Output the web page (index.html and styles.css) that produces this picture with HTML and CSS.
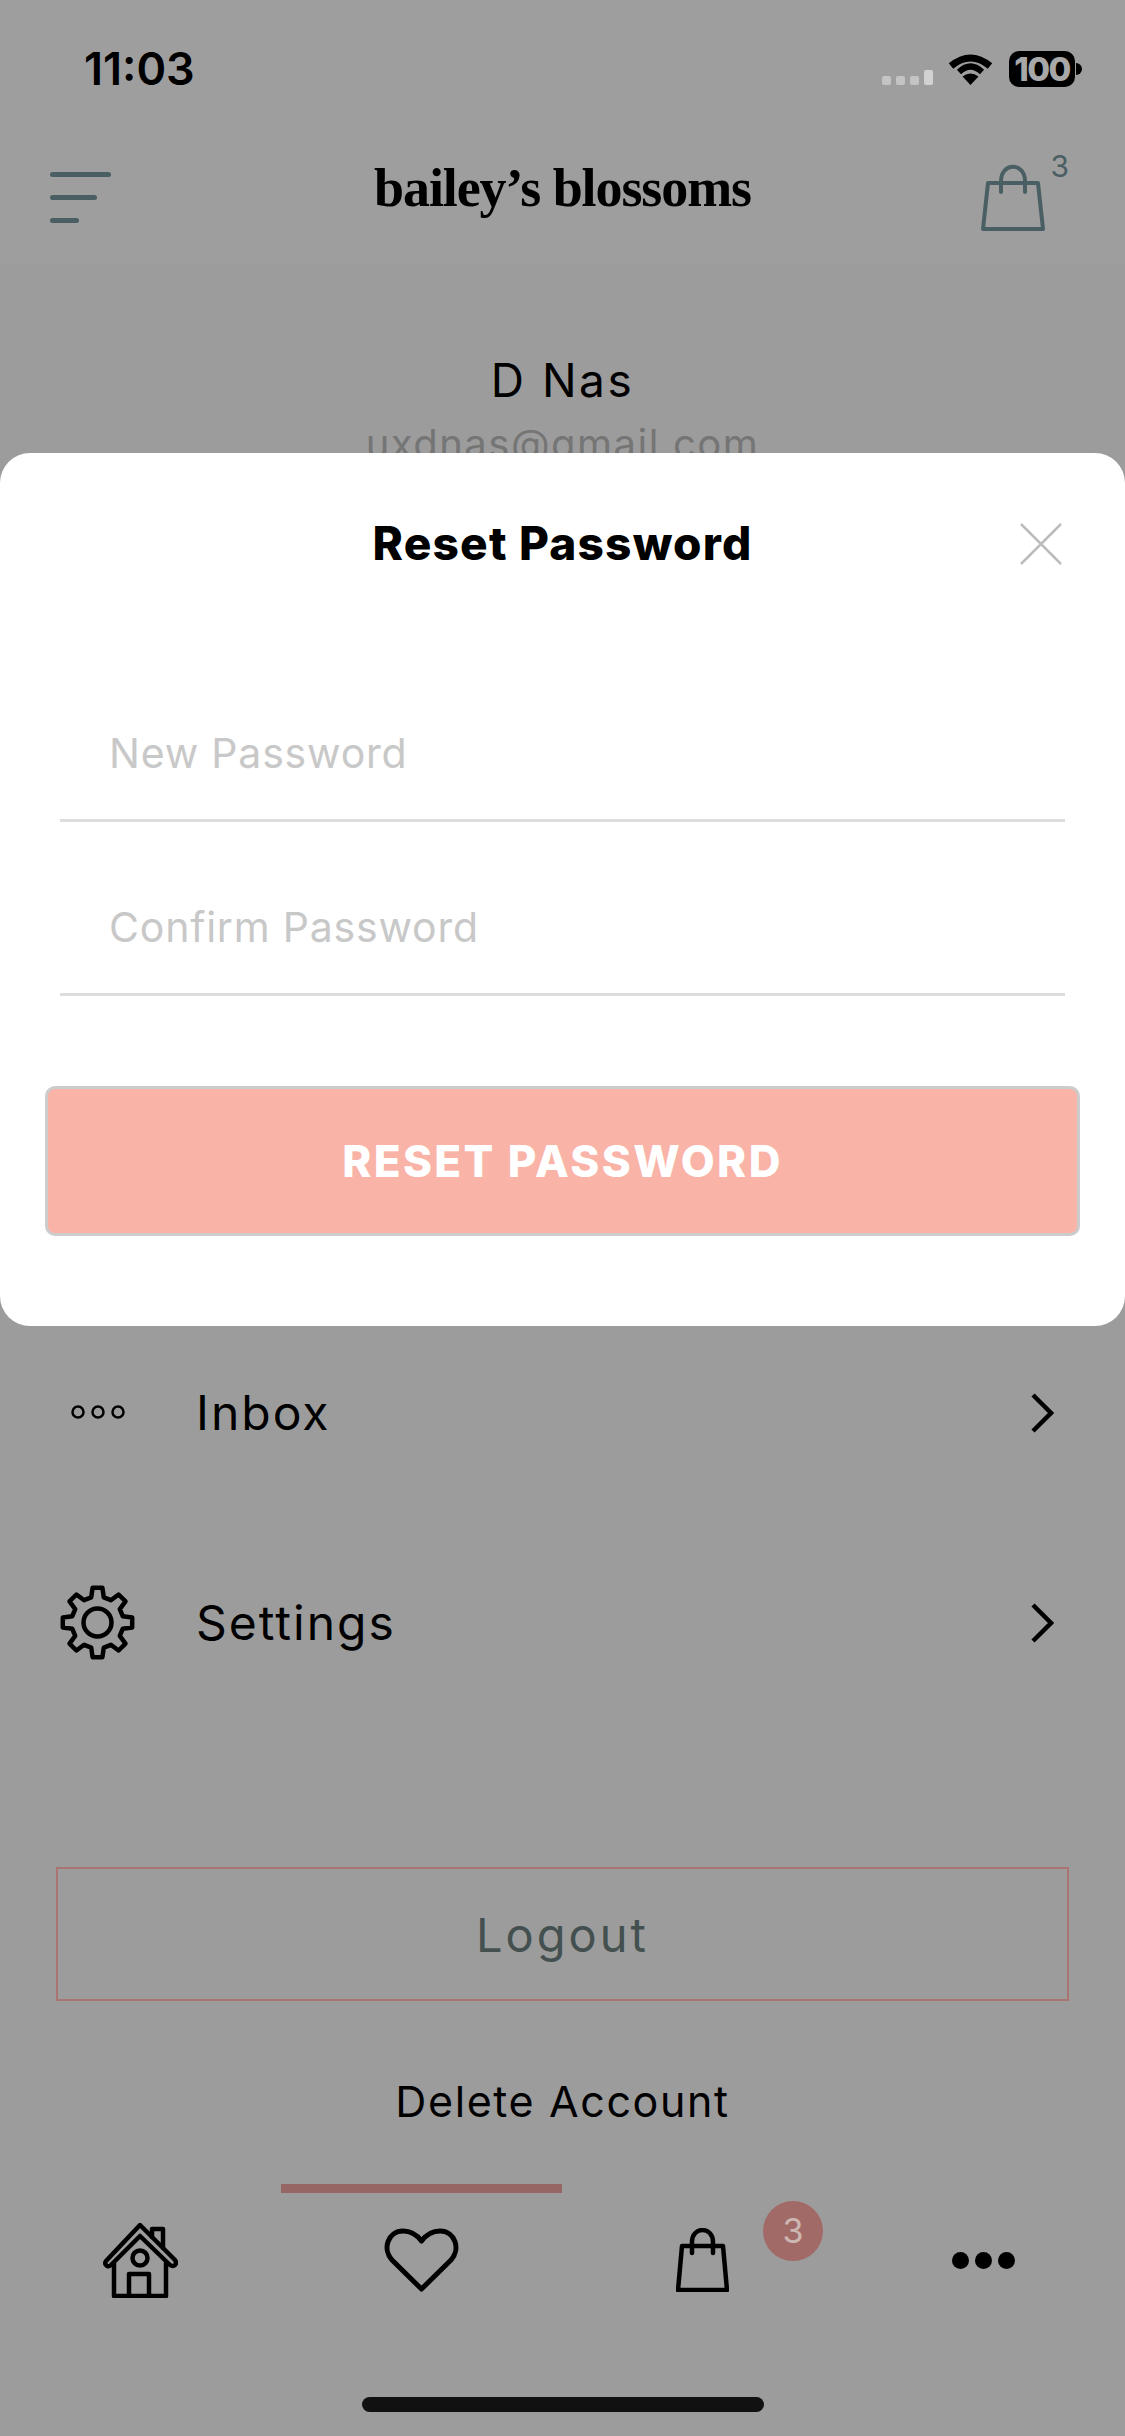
FILE: index.html
```html
<!DOCTYPE html>
<html lang="en">
<head>
    <meta charset="UTF-8">
    <meta name="viewport" content="width=device-width, initial-scale=1.0">
    <title>Bailey's Blossoms - Reset Password</title>
    <link rel="stylesheet" href="styles.css">
</head>
<body>
    <div class="screen">
        <div class="top">
            <div class="status-bar">
                <span class="time">11:03</span>
                <div class="status-icons">
                    <div class="signal"><i></i><i></i><i></i><i class="signal-tall"></i></div>
                    <svg class="wifi" width="45" height="33" viewBox="0 0 45 33">
                        <path d="M22.5 33 L14.5 24.5 Q22.5 18.5 30.5 24.5 Z" fill="#000"/>
                        <path d="M3 13 Q22.5 -3 42 13" fill="none" stroke="#000" stroke-width="7" stroke-linecap="butt" transform="translate(0 1)"/>
                        <path d="M11 20 Q22.5 9 34 20" fill="none" stroke="#000" stroke-width="6"/>
                    </svg>
                    <div class="battery"><span class="battery-level">100</span><i class="battery-tip"></i></div>
                </div>
            </div>
            <div class="nav">
                <div class="burger"><i class="line-a"></i><i class="line-b"></i><i class="line-c"></i></div>
                <div class="logo">bailey’s blossoms</div>
                <div class="cart">
                    <svg width="64" height="67" viewBox="0 0 64 67" fill="none" stroke="#4a5f63" stroke-width="4" stroke-linejoin="round" stroke-linecap="round">
                        <path d="M7 19 H57 L62 65 H2 Z"/>
                        <path d="M20 28 V17 C20 -2 44 -2 44 17 V28"/>
                    </svg>
                    <span class="cart-count">3</span>
                </div>
            </div>
        </div>

        <div class="profile">
            <div class="profile-name">D Nas</div>
            <div class="profile-email">uxdnas@gmail.com</div>
        </div>

        <div class="menu">
            <div class="menu-row">
                <span class="menu-icon">
                    <svg width="58" height="16" viewBox="0 0 58 16" fill="none" stroke="#000" stroke-width="2.5">
                        <circle cx="9" cy="8" r="5.5"/>
                        <circle cx="29" cy="8" r="5.5"/>
                        <circle cx="49" cy="8" r="5.5"/>
                    </svg>
                </span>
                <span class="menu-label">Inbox</span>
                <svg class="chevron" width="24" height="40" viewBox="0 0 24 40" fill="none" stroke="#000" stroke-width="4.5">
                    <path d="M3 2 L21 20 L3 38"/>
                </svg>
            </div>
            <div class="menu-row">
                <span class="menu-icon">
                    <svg width="75" height="75" viewBox="0 0 75 75" fill="none" stroke="#000" stroke-width="4.5" stroke-linejoin="round">
                        <path d="M31.2 12.3 L32.6 2.8 H42.4 L43.8 12.3 L50.9 15.2 L58.6 9.5 L65.5 16.4 L59.8 24.1 L62.7 31.2 L72.2 32.6 V42.4 L62.7 43.8 L59.8 50.9 L65.5 58.6 L58.6 65.5 L50.9 59.8 L43.8 62.7 L42.4 72.2 H32.6 L31.2 62.7 L24.1 59.8 L16.4 65.5 L9.5 58.6 L15.2 50.9 L12.3 43.8 L2.8 42.4 V32.6 L12.3 31.2 L15.2 24.1 L9.5 16.4 L16.4 9.5 L24.1 15.2 Z"/>
                        <circle cx="37.5" cy="37.5" r="14"/>
                    </svg>
                </span>
                <span class="menu-label">Settings</span>
                <svg class="chevron" width="24" height="40" viewBox="0 0 24 40" fill="none" stroke="#000" stroke-width="4.5">
                    <path d="M3 2 L21 20 L3 38"/>
                </svg>
            </div>
        </div>

        <button class="logout">Logout</button>
        <div class="delete-account">Delete Account</div>

        <div class="tabbar">
            <div class="tab">
                <svg width="75" height="75" viewBox="0 0 75 75" fill="none" stroke="#000" stroke-width="4.5" stroke-linejoin="round" stroke-linecap="round">
                    <path d="M3 38 Q1 41 4 43 Q6 44 8 42 L37 13 L67 42 Q70 44 72 42 Q74 40 72 37 L37 2 Z"/>
                    <path d="M49 14 V6 H60 V25"/>
                    <path d="M11 40 V73 H63 V40"/>
                    <path d="M26 73 V51 H46 V73"/>
                    <circle cx="37" cy="35" r="7.5"/>
                </svg>
            </div>
            <div class="tab tab-active">
                <svg width="75" height="64" viewBox="0 0 75 64" fill="none" stroke="#000" stroke-width="5" stroke-linejoin="round">
                    <path d="M37.5 61 L8 32 C-2 21 4 3 19 3 C27 3 33 7 37.5 13 C42 7 48 3 56 3 C71 3 77 21 67 32 Z"/>
                </svg>
            </div>
            <div class="tab">
                <svg width="53" height="64" viewBox="0 0 53 64" fill="none" stroke="#000" stroke-width="4.5" stroke-linejoin="round" stroke-linecap="round">
                    <path d="M6 18 H47 L51 62 H2 Z"/>
                    <path d="M16 25 V14 C16 -2 37 -2 37 14 V25"/>
                </svg>
                <span class="tab-badge">3</span>
            </div>
            <div class="tab">
                <div class="dots"><i></i><i></i><i></i></div>
            </div>
        </div>
        <div class="home-indicator"></div>

        <div class="modal">
            <div class="modal-title">Reset Password</div>
            <svg class="modal-close" width="44" height="44" viewBox="0 0 44 44" fill="none" stroke="#bdbdbd" stroke-width="2.5">
                <path d="M2 2 L42 42 M42 2 L2 42"/>
            </svg>
            <div class="field">New Password</div>
            <div class="field">Confirm Password</div>
            <button class="btn-reset">RESET PASSWORD</button>
        </div>
    </div>
</body>
</html>
```

FILE: styles.css
```css
* {
    box-sizing: border-box;
}

body {
    margin: 0;
    font-family: Inter, sans-serif;
    color: #000;
}

.screen {
    position: relative;
    width: 1125px;
    height: 2436px;
    overflow: hidden;
    background: #9c9c9c;
}

.top {
    height: 265px;
    background: #9e9e9e;
}

.status-bar {
    display: flex;
    justify-content: space-between;
    height: 136px;
    padding: 46px 43px 0 84px;
}

.time {
    font-size: 45px;
    line-height: 46px;
    font-weight: 600;
}

.status-icons {
    display: flex;
    align-items: flex-start;
    height: 40px;
    margin-top: 5px;
}

.signal {
    display: flex;
    align-items: flex-end;
    gap: 5px;
    height: 34px;
    margin-right: 15px;
}

.signal i {
    width: 9px;
    height: 9px;
    border-radius: 2px;
    background: #c4c4c4;
}

.signal .signal-tall {
    height: 15px;
    background: #d2d2d2;
}

.wifi {
    margin: 1px 16px 0 0;
}

.battery {
    display: flex;
    align-items: center;
}

.battery-level {
    width: 66px;
    height: 36px;
    border-radius: 10px;
    background: #000;
    color: #a8a8a8;
    font-size: 33px;
    font-weight: 800;
    line-height: 36px;
    text-align: center;
    letter-spacing: -1.5px;
}

.battery-tip {
    width: 6px;
    height: 12px;
    margin-left: 1px;
    border-radius: 0 6px 6px 0;
    background: #000;
}

.nav {
    display: grid;
    grid-template-columns: 1fr auto 1fr;
    align-items: center;
    height: 122px;
    padding: 0 50px;
}

.burger {
    display: flex;
    flex-direction: column;
    gap: 18px;
}

.burger i {
    display: block;
    height: 5px;
    border-radius: 3px;
    background: #4a5f63;
}

.line-a { width: 61px; }
.line-b { width: 47px; }
.line-c { width: 29px; }

.logo {
    margin-bottom: 18px;
    font-family: "Liberation Serif", serif;
    font-size: 54px;
    font-weight: 700;
    letter-spacing: -1.1px;
}

.cart {
    position: relative;
    justify-self: end;
    height: 67px;
    margin-right: 30px;
}

.cart svg {
    display: block;
}

.cart-count {
    position: absolute;
    top: -13px;
    right: -24px;
    color: #4a5f63;
    font-size: 30px;
    line-height: 30px;
}

.profile {
    padding-top: 87px;
    text-align: center;
}

.profile-name {
    font-size: 46px;
    line-height: 56px;
    letter-spacing: 2.5px;
}

.profile-email {
    margin-top: 12px;
    font-size: 40px;
    line-height: 48px;
    letter-spacing: 1.5px;
    color: #757575;
}

.menu {
    margin-top: 839px;
}

.menu-row {
    display: flex;
    align-items: center;
    height: 210px;
    padding: 0 71px 0 60px;
}

.menu-icon {
    display: flex;
    justify-content: center;
    width: 75px;
    margin-right: 61px;
}

.menu-label {
    flex: 1;
    font-size: 48px;
    letter-spacing: 2px;
}

.chevron {
    margin-top: 2px;
}

.logout {
    display: block;
    width: 1013px;
    height: 134px;
    margin: 140px 0 0 56px;
    border: 2px solid #a97472;
    background: none;
    color: #43504f;
    font-family: inherit;
    font-size: 47px;
    letter-spacing: 3px;
}

.delete-account {
    margin-top: 66px;
    font-size: 43px;
    line-height: 68px;
    letter-spacing: 1.6px;
    text-align: center;
}

.tabbar {
    position: absolute;
    left: 0;
    right: 0;
    top: 2184px;
    display: grid;
    grid-template-columns: repeat(4, 281px);
}

.tab {
    position: relative;
    display: flex;
    justify-content: center;
    align-items: center;
    height: 143px;
    padding-top: 9px;
}

.tab-active {
    border-top: 9px solid #966664;
    padding-top: 0;
}

.tab-badge {
    position: absolute;
    left: 201px;
    top: 17px;
    width: 60px;
    height: 60px;
    border-radius: 50%;
    background: #a26a66;
    color: #cdb7b3;
    font-size: 34px;
    line-height: 60px;
    text-align: center;
}

.dots {
    display: flex;
    gap: 6px;
}

.dots i {
    width: 17px;
    height: 17px;
    border-radius: 50%;
    background: #000;
}

.home-indicator {
    position: absolute;
    left: 362px;
    top: 2397px;
    width: 402px;
    height: 15px;
    border-radius: 8px;
    background: #111;
}

.modal {
    position: absolute;
    left: 0;
    right: 0;
    top: 453px;
    height: 873px;
    padding: 60px 60px 0;
    border-radius: 30px;
    background: #fff;
}

.modal-title {
    margin-bottom: 75px;
    font-size: 46px;
    font-weight: 800;
    line-height: 60px;
    letter-spacing: 1.2px;
    text-align: center;
}

.modal-close {
    position: absolute;
    top: 69px;
    right: 62px;
}

.field {
    height: 174px;
    padding: 75px 0 0 49px;
    border-bottom: 3px solid #ddd;
    color: #c8c8c8;
    font-size: 41px;
    line-height: 60px;
    letter-spacing: 0.8px;
}

.btn-reset {
    display: block;
    width: 1035px;
    height: 150px;
    margin: 90px 0 0 -15px;
    border: 3px solid #ccc;
    border-radius: 10px;
    background: #f9b3a7;
    color: #fff;
    font-family: inherit;
    font-size: 44px;
    font-weight: 800;
    letter-spacing: 2.4px;
}
```
